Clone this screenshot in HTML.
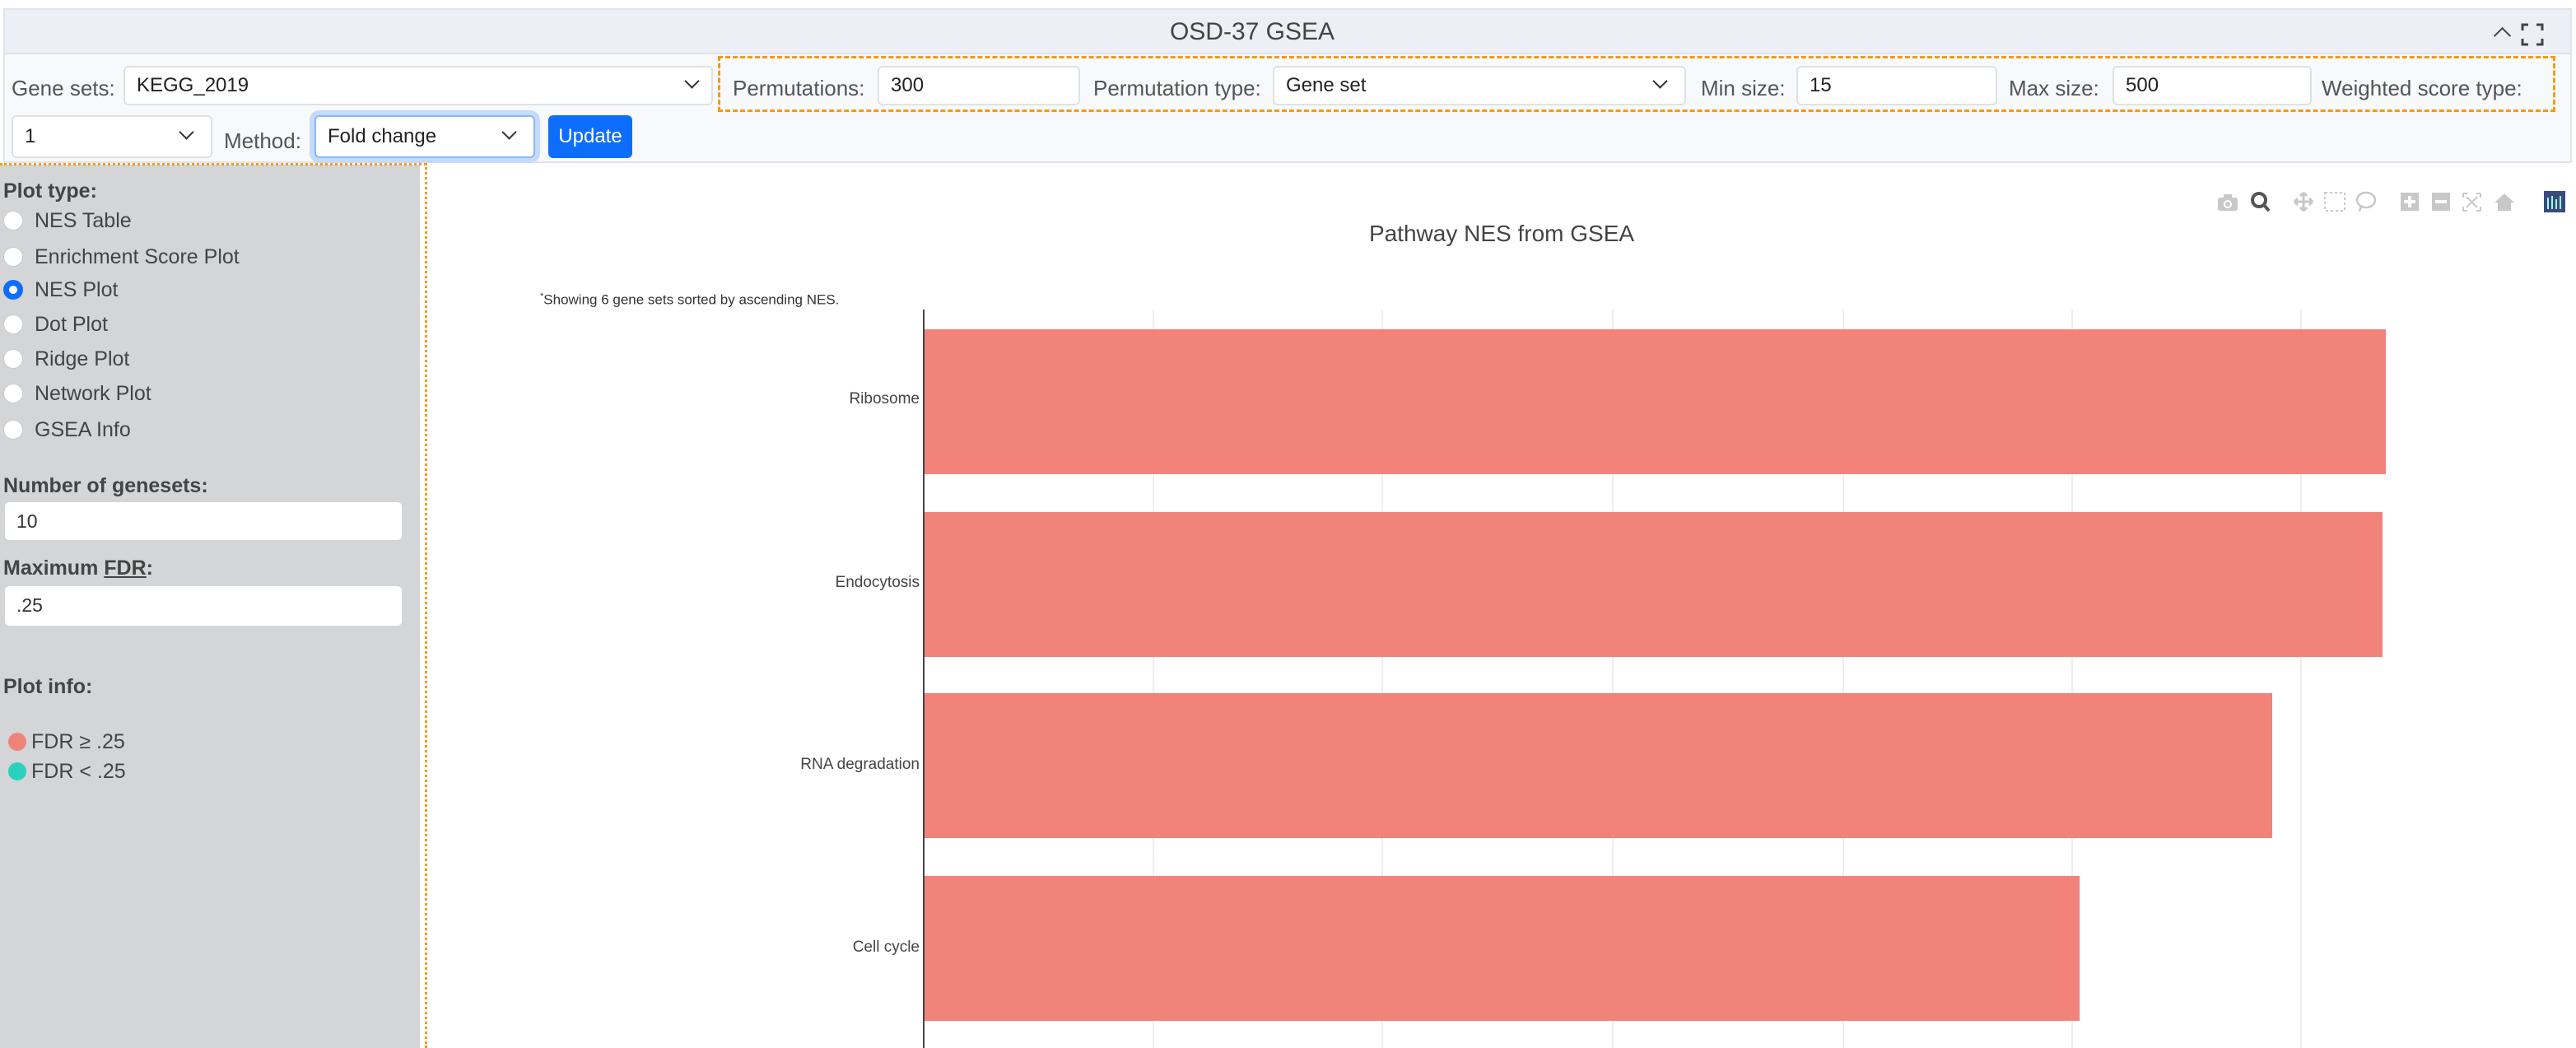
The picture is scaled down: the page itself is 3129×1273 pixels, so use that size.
<!DOCTYPE html>
<html><head><meta charset="utf-8"><style>
*{box-sizing:border-box;margin:0;padding:0}
body{width:3129px;height:1273px;background:#fff;font-family:"Liberation Sans",sans-serif;position:relative;overflow:hidden;color:#333}
.a{position:absolute}
.lbl{position:absolute;font-size:26px;color:#555;line-height:30px}
.inp{position:absolute;background:#fff;border:2px solid #dee2e6;border-radius:6px;font-size:24px;color:#222;padding-left:14px;display:flex;align-items:center}
.chev{position:absolute;width:13px;height:13px;border-right:2px solid #333;border-bottom:2px solid #333;transform:rotate(45deg)}
.radio{position:absolute;left:4px;width:24px;height:24px;border-radius:50%;background:#fff;border:1px solid #ccc}
.rl{position:absolute;left:42px;font-size:25px;color:#444;line-height:28px}
.b{position:absolute;font-size:25px;font-weight:bold;color:#444;left:4px}
.bar{position:absolute;left:1122px;background:#f1837a;height:176px}
.yl{position:absolute;right:2012px;font-size:19px;color:#444;text-align:right}
.grid{position:absolute;top:376px;height:897px;width:2px;background:#eeeeee}
</style></head><body>
<div class="a" style="left:4px;top:10px;width:3120px;height:188px;border:2px solid #e1e4ea;background:#f8f9fa"></div>
<div class="a" style="left:6px;top:12px;width:3116px;height:54px;background:#eceff5;border-bottom:2px solid #dfe2e8"></div>
<div class="a" style="left:0;top:22px;width:3042px;text-align:center;font-size:30px;color:#444">OSD-37 GSEA</div>
<div class="a" style="left:3032px;top:36px;width:15px;height:15px;border-left:2px solid #444;border-top:2px solid #444;transform:rotate(45deg)"></div>
<svg class="a" style="left:3062px;top:28px" width="28" height="28" viewBox="0 0 28 28" fill="none" stroke="#444" stroke-width="3"><path d="M2 9V2h7M19 2h7v7M26 19v7h-7M9 26H2v-7"/></svg>

<div class="lbl" style="left:14px;top:92px">Gene sets:</div>
<div class="inp" style="left:150px;top:80px;width:716px;height:48px">KEGG_2019</div><div class="chev" style="left:834px;top:92px"></div>
<div class="a" style="left:872px;top:68px;width:2232px;height:68px;border:3px dashed #f59a12"></div>
<div class="lbl" style="left:890px;top:92px">Permutations:</div>
<div class="inp" style="left:1066px;top:80px;width:246px;height:48px">300</div>
<div class="lbl" style="left:1328px;top:92px">Permutation type:</div>
<div class="inp" style="left:1546px;top:80px;width:502px;height:48px">Gene set</div><div class="chev" style="left:2010px;top:92px"></div>
<div class="lbl" style="left:2066px;top:92px">Min size:</div>
<div class="inp" style="left:2182px;top:80px;width:244px;height:48px">15</div>
<div class="lbl" style="left:2440px;top:92px">Max size:</div>
<div class="inp" style="left:2566px;top:80px;width:242px;height:48px">500</div>
<div class="lbl" style="left:2820px;top:92px">Weighted score type:</div>

<div class="inp" style="left:14px;top:140px;width:244px;height:52px">1</div><div class="chev" style="left:220px;top:154px"></div>
<div class="lbl" style="left:272px;top:156px">Method:</div>
<div class="inp" style="left:382px;top:140px;width:268px;height:52px;border-color:#86b7fe;box-shadow:0 0 0 6px #c6dafc">Fold change</div><div class="chev" style="left:612px;top:154px"></div>
<div class="a" style="left:666px;top:140px;width:102px;height:52px;background:#0d6efd;border-radius:6px;color:#fff;font-size:24px;display:flex;align-items:center;justify-content:center">Update</div>

<div class="a" style="left:0;top:200px;width:510px;height:1073px;background:#d4d5d7"></div>
<div class="a" style="left:0;top:198px;width:518px;border-top:3px dotted #f59a12"></div>
<div class="a" style="left:516px;top:198px;height:1075px;border-left:3px dotted #f59a12"></div>
<div class="b" style="top:218px">Plot type:</div>
<div class="radio" style="top:256px"></div><div class="rl" style="top:254px">NES Table</div>
<div class="radio" style="top:300px"></div><div class="rl" style="top:298px">Enrichment Score Plot</div>
<div class="radio" style="top:340px;border:7px solid #0d6efd"></div><div class="rl" style="top:338px">NES Plot</div>
<div class="radio" style="top:382px"></div><div class="rl" style="top:380px">Dot Plot</div>
<div class="radio" style="top:424px"></div><div class="rl" style="top:422px">Ridge Plot</div>
<div class="radio" style="top:466px"></div><div class="rl" style="top:464px">Network Plot</div>
<div class="radio" style="top:510px"></div><div class="rl" style="top:508px">GSEA Info</div>
<div class="b" style="top:576px">Number of genesets:</div>
<div class="a" style="left:6px;top:610px;width:482px;height:46px;background:#fff;border-radius:5px;font-size:23px;padding:10px 0 0 14px">10</div>
<div class="b" style="top:676px">Maximum <u>FDR</u>:</div>
<div class="a" style="left:6px;top:712px;width:482px;height:48px;background:#fff;border-radius:5px;font-size:23px;padding:10px 0 0 14px">.25</div>
<div class="b" style="top:820px">Plot info:</div>
<div class="a" style="left:10px;top:890px;width:22px;height:22px;border-radius:50%;background:#f08378"></div><div class="rl" style="left:38px;top:887px">FDR ≥ .25</div>
<div class="a" style="left:10px;top:926px;width:22px;height:22px;border-radius:50%;background:#2ad0c0"></div><div class="rl" style="left:38px;top:923px">FDR &lt; .25</div>

<svg class="a" style="left:2690px;top:230px" width="430" height="30" viewBox="0 0 430 30">
<g fill="#c8c8c8"><rect x="4" y="10" width="24" height="16" rx="3"/><rect x="11" y="6" width="10" height="5"/><circle cx="16" cy="18" r="5" fill="#fff"/><circle cx="16" cy="18" r="3"/>
<path d="M97 15h22M108 4v22M97 15l4-4M97 15l4 4M119 15l-4-4M119 15l-4 4M108 4l-4 4M108 4l4 4M108 26l-4-4M108 26l4-4" stroke="#c8c8c8" stroke-width="3" fill="none"/>
<rect x="134" y="4" width="24" height="22" fill="none" stroke="#c8c8c8" stroke-width="2" stroke-dasharray="3 3"/>
<ellipse cx="184" cy="13" rx="11" ry="9" fill="none" stroke="#c8c8c8" stroke-width="2.5"/><path d="M178 20l-2 7" stroke="#c8c8c8" stroke-width="2.5"/>
<rect x="226" y="4" width="22" height="22"/><rect x="264" y="4" width="22" height="22"/>
<path d="M302 5h5M302 5v5M323 5h-5M323 5v5M302 26h5M302 26v-5M323 26h-5M323 26v-5M306 9l13 13M319 9l-13 13" stroke="#c8c8c8" stroke-width="2" fill="none"/>
<path d="M340 16l12-11 12 11h-4v10h-16v-10z"/></g>
<g fill="#fff"><rect x="235" y="8" width="4" height="14"/><rect x="230" y="13" width="14" height="4"/><rect x="268" y="13" width="14" height="4"/></g>
<circle cx="54" cy="13" r="8" fill="none" stroke="#555" stroke-width="4"/><path d="M60 19l6 7" stroke="#555" stroke-width="4"/>
<rect x="400" y="2" width="26" height="26" fill="#3a4a7a"/><path d="M405 10v14M410 8v16M415 12v12M420 8v16" stroke="#9fd" stroke-width="2"/>
</svg>

<div class="a" style="left:0;top:268px;width:3648px;text-align:center;font-size:28px;color:#444">Pathway NES from GSEA</div>
<div class="a" style="left:656px;top:354px;font-size:17px;color:#333"><sup style="font-size:11px">*</sup>Showing 6 gene sets sorted by ascending NES.</div>
<div class="grid" style="left:1400px"></div><div class="grid" style="left:1678px"></div><div class="grid" style="left:1958px"></div><div class="grid" style="left:2238px"></div><div class="grid" style="left:2516px"></div><div class="grid" style="left:2794px"></div>
<div class="bar" style="top:400px;width:1776px"></div>
<div class="bar" style="top:622px;width:1772px"></div>
<div class="bar" style="top:842px;width:1638px"></div>
<div class="bar" style="top:1064px;width:1404px"></div>
<div class="a" style="left:1121px;top:376px;width:2px;height:897px;background:#444"></div>
<div class="yl" style="top:474px">Ribosome</div>
<div class="yl" style="top:697px">Endocytosis</div>
<div class="yl" style="top:918px">RNA degradation</div>
<div class="yl" style="top:1140px">Cell cycle</div>
</body></html>
